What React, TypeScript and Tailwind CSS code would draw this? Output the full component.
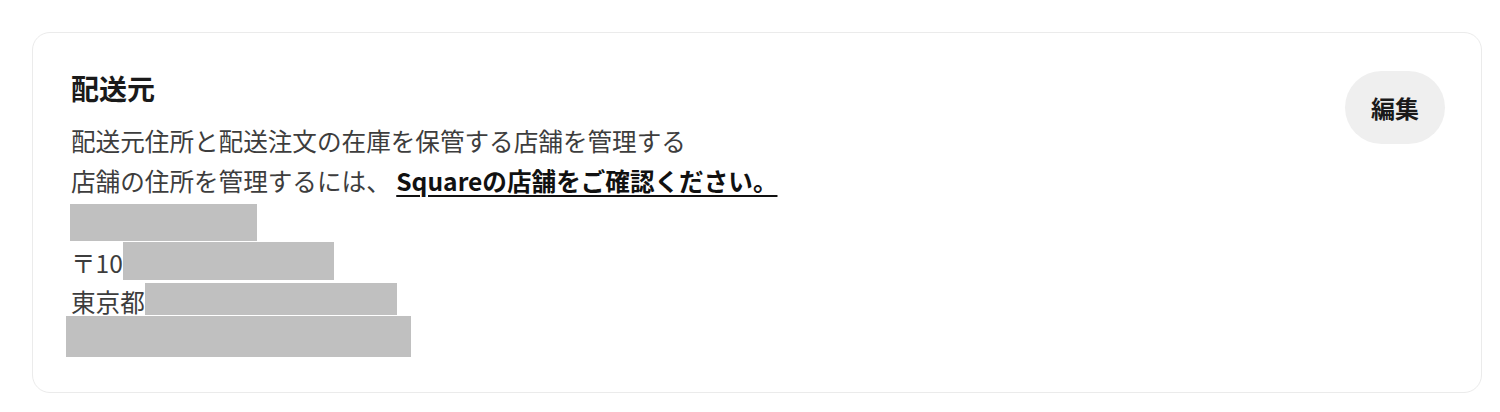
import React from "react";

export default function App() {
  return (
    <div className="min-h-[412px] w-[1500px] bg-white pl-[32px] pr-[18px] pt-[32px] font-['Noto_Sans_CJK_JP','Noto_Sans',sans-serif]">
      <div className="flex w-[1450px] items-start justify-between rounded-[18px] border border-[#ebebeb] pb-[30px] pl-[38px] pr-[36px] pt-[37px]">
        <div className="flex flex-col">
          <h2 className="mt-[-2px] h-[40px] text-[28px] font-bold leading-[40px] text-[#1a1a1a]">配送元</h2>
          <div className="mt-[14px] flex flex-col text-[24.6px] leading-[40px] text-[#3d3d3d]">
            <div className="mt-[-2px] h-[40px] whitespace-nowrap">配送元住所と配送注文の在庫を保管する店舗を管理する</div>
            <div className="h-[40px] whitespace-nowrap">
              店舗の住所を管理するには、{" "}
              <a className="font-bold text-[#111111] underline decoration-[2px] underline-offset-[4px]" href="#">
                Squareの店舗をご確認ください。{" "}
              </a>
            </div>
            <div className="mt-[2px] flex h-[40px] items-start">
              <span className="ml-[-1px] mt-[2px] block h-[37px] w-[187px] bg-[#c0c0c0]" />
            </div>
            <div className="flex h-[40px] items-start">
              <span className="leading-[40px]">〒10</span>
              <span className="block h-[38px] w-[211px] bg-[#c0c0c0]" />
            </div>
            <div className="flex h-[40px] items-start">
              <span className="mt-[-1px] leading-[40px]">東京都</span>
              <span className="mt-[1px] block h-[32px] w-[252px] bg-[#c0c0c0]" />
            </div>
            <div className="flex h-[40px] items-start">
              <span className="ml-[-5px] mt-[-6px] block h-[41px] w-[345px] bg-[#c0c0c0]" />
            </div>
          </div>
        </div>
        <button className="mt-[1px] flex h-[73px] w-[100px] items-center justify-center rounded-full bg-[#efefef] text-[24px] font-bold text-[#1a1a1a]">
          編集
        </button>
      </div>
    </div>
  );
}
